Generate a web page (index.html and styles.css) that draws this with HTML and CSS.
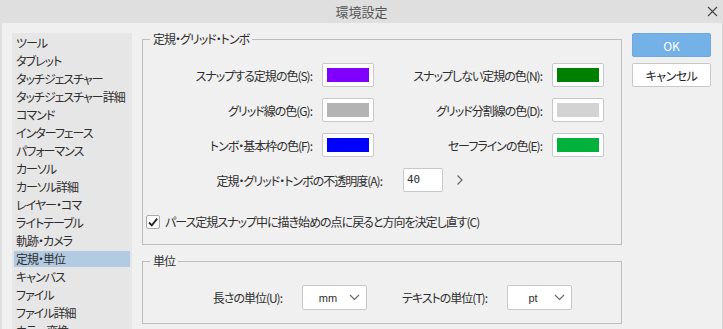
FILE: index.html
```html
<!DOCTYPE html>
<html lang="ja">
<head>
    <meta charset="UTF-8">
    <title>環境設定</title>
    <link rel="stylesheet" href="styles.css">
</head>
<body>

<div class="titlebar">
    <span class="title">環境設定</span>
    <span class="close">
        <svg width="11" height="11" viewBox="0 0 11 11"><path d="M1 1 L10 10 M10 1 L1 10" stroke="#444" stroke-width="1.1" fill="none"/></svg>
    </span>
</div>

<div class="main">
    <!-- category list -->
    <ul class="sidebar">
        <li>ツール</li>
        <li>タブレット</li>
        <li>タッチジェスチャー</li>
        <li>タッチジェスチャー詳細</li>
        <li>コマンド</li>
        <li>インターフェース</li>
        <li>パフォーマンス</li>
        <li>カーソル</li>
        <li>カーソル詳細</li>
        <li>レイヤー・コマ</li>
        <li>ライトテーブル</li>
        <li>軌跡・カメラ</li>
        <li class="selected">定規・単位</li>
        <li>キャンバス</li>
        <li>ファイル</li>
        <li>ファイル詳細</li>
        <li>カラー変換</li>
    </ul>

    <div class="content">
        <fieldset class="group group-ruler">
            <legend>定規・グリッド・トンボ</legend>
            <div class="color-grid">
                <label>スナップする定規の色(S):</label>
                <span class="swatch"><span class="fill c-purple"></span></span>
                <label>スナップしない定規の色(N):</label>
                <span class="swatch"><span class="fill c-green"></span></span>

                <label>グリッド線の色(G):</label>
                <span class="swatch"><span class="fill c-gray"></span></span>
                <label>グリッド分割線の色(D):</label>
                <span class="swatch"><span class="fill c-lightgray"></span></span>

                <label>トンボ・基本枠の色(F):</label>
                <span class="swatch"><span class="fill c-blue"></span></span>
                <label>セーフラインの色(E):</label>
                <span class="swatch"><span class="fill c-safe"></span></span>
            </div>

            <div class="opacity-row">
                <label>定規・グリッド・トンボの不透明度(A):</label>
                <span class="num-input">40</span>
                <span class="arrow">
                    <svg width="8" height="12" viewBox="0 0 8 12"><path d="M1.5 1.5 L6 6 L1.5 10.5" stroke="#666" stroke-width="1.2" fill="none"/></svg>
                </span>
            </div>

            <div class="check-row">
                <span class="checkbox">
                    <svg width="12" height="12" viewBox="0 0 12 12"><path d="M2 6.5 L4.8 9.3 L10.2 2.6" stroke="#222" stroke-width="1.8" fill="none"/></svg>
                </span>
                <span>パース定規スナップ中に描き始めの点に戻ると方向を決定し直す(C)</span>
            </div>
        </fieldset>

        <fieldset class="group group-unit">
            <legend>単位</legend>
            <div class="unit-row">
                <label class="unit-label-1">長さの単位(U):</label>
                <span class="select">
                    <span class="select-value">mm</span>
                    <svg width="11" height="7" viewBox="0 0 11 7"><path d="M1 1 L5.5 5.5 L10 1" stroke="#666" stroke-width="1.1" fill="none"/></svg>
                </span>
                <label class="unit-label-2">テキストの単位(T):</label>
                <span class="select">
                    <span class="select-value">pt</span>
                    <svg width="11" height="7" viewBox="0 0 11 7"><path d="M1 1 L5.5 5.5 L10 1" stroke="#666" stroke-width="1.1" fill="none"/></svg>
                </span>
            </div>
        </fieldset>
    </div>

    <div class="buttons">
        <button class="btn btn-ok">OK</button>
        <button class="btn">キャンセル</button>
    </div>
</div>

</body>
</html>
```

FILE: styles.css
```css
html, body {
    margin: 0;
    padding: 0;
    height: 100%;
    overflow: hidden;
}
body {
    font-family: "Noto Sans CJK JP", "Noto Sans", sans-serif;
    font-size: 12px;
    font-feature-settings: "palt";
    letter-spacing: -1px;
    color: #2e2e2e;
    background-color: #f0f0f0;
}

/* window title */
.titlebar {
    height: 23px;
    background-color: #dfdfdf;
    display: flex;
    align-items: center;
    justify-content: center;
    position: relative;
}
.title {
    font-size: 13px;
    color: #555;
    letter-spacing: 0;
}
.close {
    position: absolute;
    right: 5px;
    top: 6px;
    line-height: 0;
}

.main {
    display: flex;
    gap: 10px;
    height: 306px;
    padding: 10px 11px 0 10px;
    border-left: 2px solid #dfdfdf;
    border-right: 1px solid #d4d4d4;
    box-sizing: border-box;
}

/* left list */
.sidebar {
    list-style: none;
    margin: 0;
    padding: 1px 0 0 0;
    width: 120px;
    flex-shrink: 0;
    background-color: #e6e6e6;
    display: flex;
    flex-direction: column;
    overflow: hidden;
}
.sidebar li {
    height: 16px;
    line-height: 16px;
    margin: 1px 2px;
    padding-left: 2px;
    white-space: nowrap;
    flex-shrink: 0;
}
.sidebar li.selected {
    background-color: #b2cbe2;
}

.content {
    width: 480px;
    flex-shrink: 0;
    margin-top: -2px;
}

.group {
    margin: 0;
    padding: 0;
    border: 1px solid #bdbdbd;
    min-width: 0;
}
.group legend {
    margin-left: 7px;
    padding: 0 3px;
    line-height: 16px;
    font-size: 12px;
}
.group-ruler {
    padding-bottom: 14px;
}
.group-unit {
    margin-top: 8px;
    padding-bottom: 13px;
}

/* colour swatches */
.color-grid {
    display: grid;
    grid-template-columns: 169px 52px 158px 52px;
    column-gap: 10px;
    row-gap: 11px;
    margin-top: 16px;
    align-items: center;
}
.color-grid label {
    text-align: right;
    white-space: nowrap;
}
.swatch {
    display: block;
    width: 52px;
    height: 24px;
    box-sizing: border-box;
    padding: 4px;
    background-color: #fff;
    border: 1px solid #c8c8c8;
    border-radius: 2px;
}
.fill {
    display: block;
    width: 100%;
    height: 100%;
}
.c-purple { background-color: #8000ff; }
.c-green { background-color: #008000; }
.c-gray { background-color: #b3b3b3; }
.c-lightgray { background-color: #d3d3d3; }
.c-blue { background-color: #0000ff; }
.c-safe { background-color: #00b23c; }

.opacity-row {
    display: flex;
    align-items: center;
    margin-top: 11px;
}
.opacity-row label {
    width: 239px;
    text-align: right;
    white-space: nowrap;
}
.num-input {
    margin-left: 21px;
    width: 40px;
    height: 24px;
    box-sizing: border-box;
    padding-left: 3px;
    line-height: 22px;
    font-family: "DejaVu Sans Mono", monospace;
    font-size: 11px;
    letter-spacing: 0;
    background-color: #fff;
    border: 1px solid #c8c8c8;
    border-radius: 2px;
}
.arrow {
    margin-left: 13px;
    line-height: 0;
}

.check-row {
    display: flex;
    align-items: center;
    gap: 5px;
    margin-top: 21px;
    padding-left: 3px;
}
.checkbox {
    width: 14px;
    height: 14px;
    box-sizing: border-box;
    border: 1px solid #aaa;
    border-radius: 2px;
    background-color: #fff;
    display: flex;
    align-items: center;
    justify-content: center;
}

/* units */
.unit-row {
    display: flex;
    align-items: center;
    margin-top: 16px;
}
.unit-label-1 {
    width: 139px;
    text-align: right;
}
.unit-label-2 {
    width: 120px;
    text-align: right;
}
.select {
    margin-left: 20px;
    width: 65px;
    height: 25px;
    box-sizing: border-box;
    background-color: #fff;
    border: 1px solid #c8c8c8;
    border-radius: 2px;
    display: flex;
    align-items: center;
    padding-right: 6px;
}
.select-value {
    flex: 1;
    text-align: center;
    font-family: "Liberation Sans", Arial, sans-serif;
    font-size: 11px;
    letter-spacing: 0;
    padding-left: 4px;
}

/* buttons */
.buttons {
    display: flex;
    flex-direction: column;
    gap: 6px;
    width: 79px;
    flex-shrink: 0;
}
.btn {
    height: 24px;
    padding: 0;
    font-family: "Noto Sans CJK JP", sans-serif;
    font-size: 12px;
    font-feature-settings: "palt";
    letter-spacing: -0.5px;
    color: #222;
    background-color: #fff;
    border: 1px solid #c8c8c8;
    border-radius: 2px;
}
.btn-ok {
    color: #fff;
    letter-spacing: 0;
    background-color: #74b1e7;
    border-color: #6ea8dc;
}
```
